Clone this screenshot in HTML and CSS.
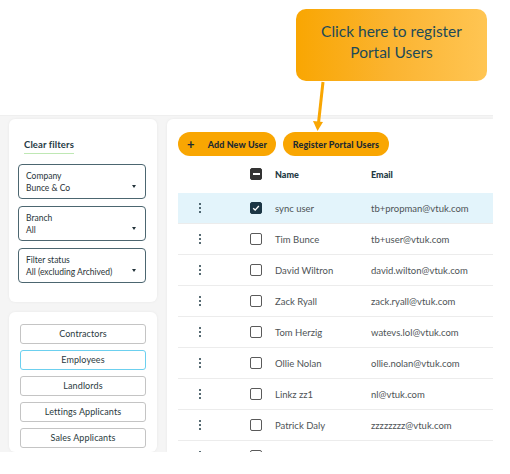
FILE: index.html
```html
<!DOCTYPE html>
<html>
<head>
<meta charset="utf-8">
<link rel="stylesheet" href="styles.css">
</head>
<body>
<div class="page">
  <div class="annot">
    <div class="callout">Click here to register<br>Portal Users</div>
    <svg class="arrow" width="20" height="60" viewBox="0 0 20 60">
      <line x1="14" y1="1" x2="9.5" y2="42" stroke="#f9a602" stroke-width="3"/>
      <polygon points="4,40 14,41 8.5,50" fill="#f9a602"/>
    </svg>
  </div>
  <div class="app">
    <aside class="side">
      <div class="card filters">
        <a class="clear">Clear filters</a>
        <div class="select"><div class="sl">Company</div><div class="sv">Bunce &amp; Co</div><span class="caret"></span></div>
        <div class="select"><div class="sl">Branch</div><div class="sv">All</div><span class="caret"></span></div>
        <div class="select"><div class="sl">Filter status</div><div class="sv">All (excluding Archived)</div><span class="caret"></span></div>
      </div>
      <div class="card types">
        <div class="tbtn">Contractors</div>
        <div class="tbtn active">Employees</div>
        <div class="tbtn">Landlords</div>
        <div class="tbtn">Lettings Applicants</div>
        <div class="tbtn">Sales Applicants</div>
      </div>
    </aside>
    <main class="card main">
      <div class="toolbar">
        <button class="pill add"><span class="plus">+</span>Add New User</button>
        <button class="pill reg">Register Portal Users</button>
      </div>
      <div class="row head">
        <span></span>
        <span class="cb ind"><i></i></span>
        <span class="hname">Name</span>
        <span class="hname">Email</span>
      </div>
      <div class="row sel"><span class="kebab"><i></i><i></i><i></i></span><span class="cb on"><svg viewBox="0 0 12 12" width="12" height="12"><path d="M2.6 6.2 L5 8.5 L9.4 3.6" fill="none" stroke="#fff" stroke-width="1.6"/></svg></span><span>sync user</span><span>tb+propman@vtuk.com</span></div>
      <div class="row"><span class="kebab"><i></i><i></i><i></i></span><span class="cb"></span><span>Tim Bunce</span><span>tb+user@vtuk.com</span></div>
      <div class="row"><span class="kebab"><i></i><i></i><i></i></span><span class="cb"></span><span>David Wiltron</span><span>david.wilton@vtuk.com</span></div>
      <div class="row"><span class="kebab"><i></i><i></i><i></i></span><span class="cb"></span><span>Zack Ryall</span><span>zack.ryall@vtuk.com</span></div>
      <div class="row"><span class="kebab"><i></i><i></i><i></i></span><span class="cb"></span><span>Tom Herzig</span><span>watevs.lol@vtuk.com</span></div>
      <div class="row"><span class="kebab"><i></i><i></i><i></i></span><span class="cb"></span><span>Ollie Nolan</span><span>ollie.nolan@vtuk.com</span></div>
      <div class="row"><span class="kebab"><i></i><i></i><i></i></span><span class="cb"></span><span>Linkz zz1</span><span>nl@vtuk.com</span></div>
      <div class="row"><span class="kebab"><i></i><i></i><i></i></span><span class="cb"></span><span>Patrick Daly</span><span>zzzzzzzz@vtuk.com</span></div>
      <div class="row"><span class="kebab"><i></i><i></i><i></i></span><span class="cb"></span><span></span><span></span></div>
    </main>
  </div>
</div>
</body>
</html>
```
FILE: styles.css
```css
* { box-sizing: border-box; }
html, body { margin: 0; padding: 0; background: #fff; }
body { font-family: "Lato", "Liberation Sans", sans-serif; width: 510px; height: 474px; overflow: hidden; }

.annot { position: relative; height: 115px; }
.callout {
  position: absolute; left: 296px; top: 9px; width: 191px; height: 72px;
  border-radius: 10px;
  background: linear-gradient(90deg, #f9a602 0%, #fbb431 50%, #ffc553 100%);
  color: #1d4a58; font-family: "Lato", sans-serif; font-size: 15.5px;
  line-height: 21px; text-align: center; padding-top: 12px;
}
.arrow { position: absolute; left: 309px; top: 81px; overflow: visible; z-index: 3; }

.app {
  display: flex; gap: 10px; width: 493px; height: 337px; overflow: hidden;
  background: #f5f5f5; padding: 3px 0 0 9px; border-top: 1px solid #efefef;
}
.card { background: #fff; border-radius: 6px; box-shadow: 0 0 3px rgba(0,0,0,0.06); }
.side { width: 148px; display: flex; flex-direction: column; gap: 10px; flex: none; }

.filters { padding: 20px 11px 19px 9px; display: flex; flex-direction: column; gap: 7px; }
.clear {
  display: block; align-self: flex-start; margin-left: 6px; margin-bottom: 3px;
  font-size: 9.5px; font-weight: 700; color: #1f3a44; padding-bottom: 3px;
  border-bottom: 1.5px solid #bfe8b4; letter-spacing: 0.1px;
}
.select {
  position: relative; height: 35px; border: 1px solid #4c6670; border-radius: 4px;
  padding: 5px 6px 0 7px; color: #27353b; font-size: 8.5px; line-height: 12px;
}
.sv { color: #2a3236; }
.caret {
  position: absolute; right: 9px; top: 20px; width: 0; height: 0;
  border-left: 2.5px solid transparent; border-right: 2.5px solid transparent; border-top: 3.5px solid #22323a;
}

.types { flex: 1; padding: 12px 11px 0 11px; display: flex; flex-direction: column; gap: 6px; }
.tbtn {
  height: 20px; border: 1px solid #c4c4c4; border-radius: 3px; text-align: center;
  font-size: 9px; line-height: 18px; color: #2a3a40; letter-spacing: 0.1px;
}
.tbtn.active { border-color: #6cd0ef; }

.main { flex: 1; border-radius: 6px 0 0 0; padding: 13px 0 0 11px; }
.toolbar { display: flex; gap: 7px; height: 24px; }
.pill {
  border: none; border-radius: 12px; background: #f9a602; height: 24px; margin: 0;
  font-family: "Lato", sans-serif; font-weight: 900; font-size: 9px; color: #1e2a30;
  padding: 0; display: flex; align-items: center; letter-spacing: 0.1px; white-space: nowrap;
}
.add { width: 98px; padding-left: 9px; }
.plus { font-size: 13px; font-weight: 700; margin-right: 13px; line-height: 1; }
.reg { width: 106px; justify-content: center; }

.row {
  display: grid; grid-template-columns: 44px 53px 96px 1fr; align-items: center;
  height: 31px; border-bottom: 1px solid #ececec; font-size: 9.5px; color: #4e5356;
}
.row.head { height: 37px; border-bottom: none; padding-bottom: 1px; }
.row.sel { background: #e3f4fb; }
.hname { font-weight: 900; color: #1f3a44; font-size: 9px; }
.kebab { display: flex; flex-direction: column; align-items: center; gap: 1.5px; }
.kebab i { width: 2.6px; height: 2.6px; border-radius: 50%; background: #1f3a44; display: block; }
.cb {
  width: 12px; height: 12px; border: 1.5px solid #5a5a5a; border-radius: 2px; margin-left: 28px;
  display: flex; align-items: center; justify-content: center;
}
.cb.on { background: #1c3644; border-color: #1c3644; }
.cb.on svg { display: block; }
.cb.ind { background: #333; border-color: #333; }
.cb.ind i { width: 7px; height: 1.6px; background: #fff; display: block; }
```
